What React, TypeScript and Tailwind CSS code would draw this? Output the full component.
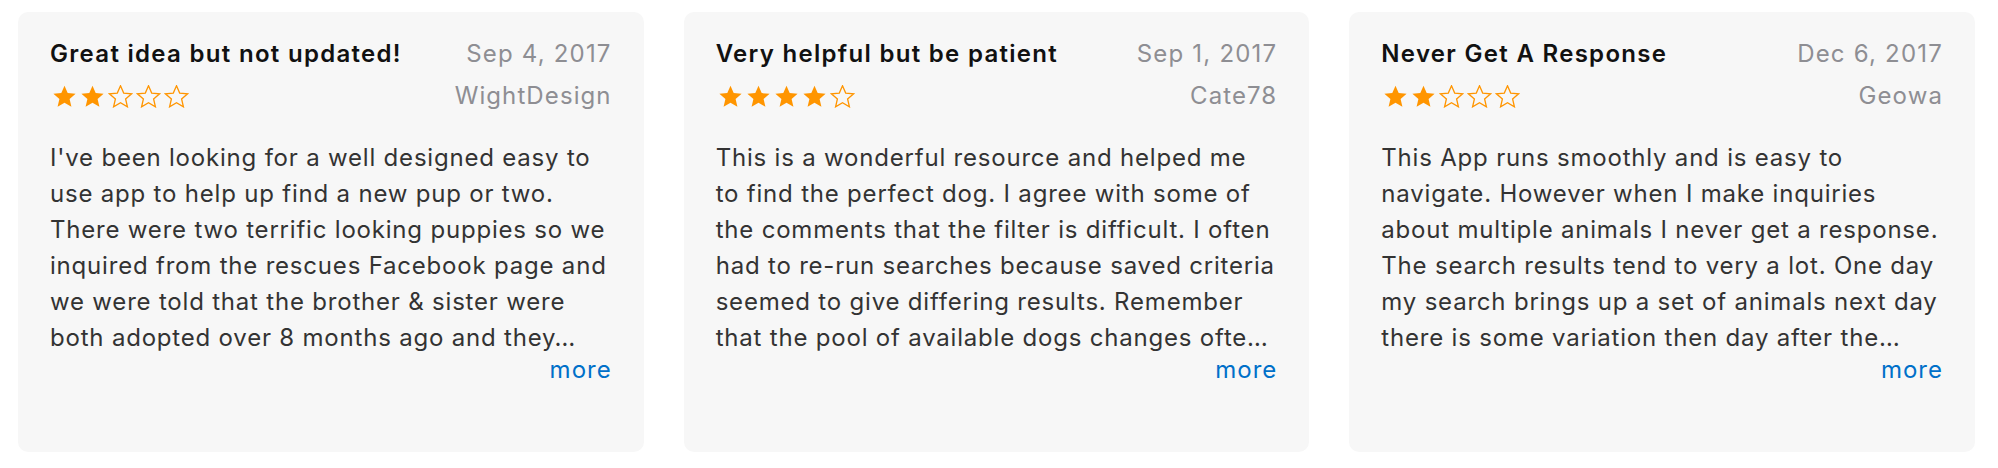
const reviews = [
  {
    title: "Great idea but not updated!",
    date: "Sep 4, 2017",
    author: "WightDesign",
    rating: 2,
    lines: [
      "I've been looking for a well designed easy to",
      "use app to help up find a new pup or two.",
      "There were two terrific looking puppies so we",
      "inquired from the rescues Facebook page and",
      "we were told that the brother & sister were",
      "both adopted over 8 months ago and they…",
    ],
  },
  {
    title: "Very helpful but be patient",
    date: "Sep 1, 2017",
    author: "Cate78",
    rating: 4,
    lines: [
      "This is a wonderful resource and helped me",
      "to find the perfect dog. I agree with some of",
      "the comments that the filter is difficult. I often",
      "had to re-run searches because saved criteria",
      "seemed to give differing results. Remember",
      "that the pool of available dogs changes ofte…",
    ],
  },
  {
    title: "Never Get A Response",
    date: "Dec 6, 2017",
    author: "Geowa",
    rating: 2,
    lines: [
      "This App runs smoothly and is easy to",
      "navigate. However when I make inquiries",
      "about multiple animals I never get a response.",
      "The search results tend to very a lot. One day",
      "my search brings up a set of animals next day",
      "there is some variation then day after the…",
    ],
  },
];

function Star({ filled }: { filled: boolean }) {
  return (
    <svg viewBox="0 0 24 23" className="h-[23px] w-[25px]">
      <path
        d="M12 0.8l3.2 7.3 7.9.7-6 5.2 1.8 7.8L12 17.7l-6.9 4.1 1.8-7.8-6-5.2 7.9-.7z"
        fill={filled ? "#ff9500" : "none"}
        stroke="#ff9500"
        strokeWidth={filled ? 0 : 1.3}
      />
    </svg>
  );
}

function ReviewCard({ title, date, author, rating, lines }: (typeof reviews)[number]) {
  return (
    <div className="h-[440px] rounded-[10px] bg-[#f7f7f7] px-8 pt-[26px]">
      <div className="flex items-center justify-between leading-8">
        <h3 className="text-[24px] font-semibold tracking-[1.3px] text-[#111111]">{title}</h3>
        <span className="text-[24px] tracking-[1.2px] text-[#8e8e93]">{date}</span>
      </div>
      <div className="mt-[10px] flex items-center justify-between leading-8">
        <div className="ml-[2px] flex gap-[3px]">
          {[0, 1, 2, 3, 4].map((i) => (
            <Star key={i} filled={i < rating} />
          ))}
        </div>
        <span className="text-[24px] tracking-[1.1px] text-[#8e8e93]">{author}</span>
      </div>
      <div className="mt-7 text-[24px] leading-9 tracking-[0.8px] text-[#333333]">
        {lines.map((line) => (
          <p key={line} className="whitespace-nowrap">
            {line}
          </p>
        ))}
      </div>
      <div className="text-right text-[24px] leading-7 tracking-[1px] text-[#0070c9]">more</div>
    </div>
  );
}

export default function App() {
  return (
    <div className="grid w-[1998px] grid-cols-3 gap-10 bg-white pt-3 pr-[23px] pb-4 pl-[18px] font-['Inter',sans-serif]">
      {reviews.map((r) => (
        <ReviewCard key={r.author} {...r} />
      ))}
    </div>
  );
}
